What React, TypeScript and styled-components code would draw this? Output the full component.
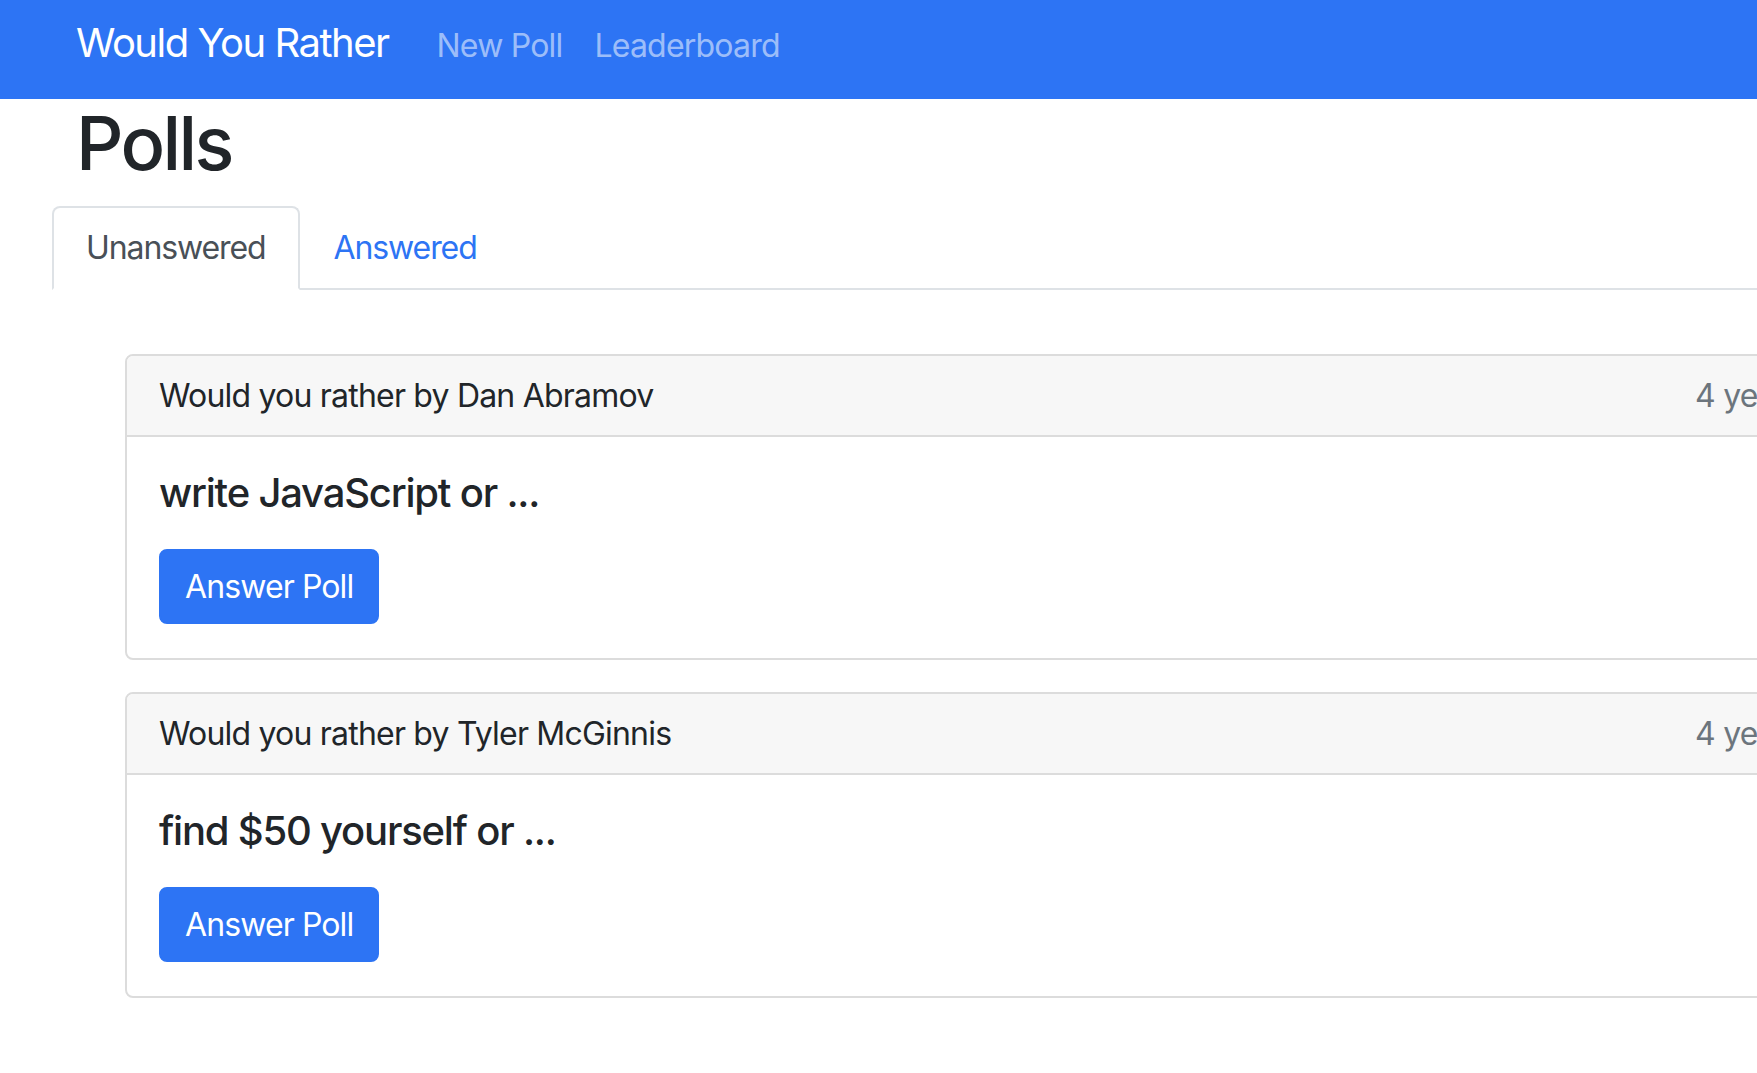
import React, { useState } from 'react';
import styled, { createGlobalStyle } from 'styled-components';

const GlobalStyle = createGlobalStyle`
  html, body {
    margin: 0;
    padding: 0;
    background: #ffffff;
    overflow: hidden;
  }
  body {
    font-family: Inter, "Noto Sans", "Liberation Sans", sans-serif;
    color: #212529;
  }
  * {
    box-sizing: border-box;
  }
`;

const Navbar = styled.nav`
  height: 99px;
  background-color: #2d74f4;
  display: flex;
  align-items: baseline;
  padding: 13px 0 0 76px;
`;

const Brand = styled.a`
  font-size: 40px;
  line-height: 60px;
  letter-spacing: -1.5px;
  color: #ffffff;
  text-decoration: none;
  margin-right: 48px;
  white-space: nowrap;
`;

const NavLink = styled.a`
  font-size: 32px;
  line-height: 48px;
  letter-spacing: -0.8px;
  color: rgba(255, 255, 255, 0.55);
  text-decoration: none;
  margin-right: 32px;
  white-space: nowrap;
`;

const Main = styled.div`
  padding-left: 52px;
  width: 1900px;
`;

const Title = styled.h1`
  margin: 0 0 18px 24px;
  font-size: 74px;
  line-height: 89px;
  letter-spacing: -2.6px;
  font-weight: 500;
`;

const Tabs = styled.ul`
  list-style: none;
  margin: 0;
  padding: 0;
  display: flex;
  border-bottom: 2px solid #dee2e6;
`;

const Tab = styled.li<{ $active: boolean }>`
  margin-bottom: -2px;
  padding: 16px 32px;
  font-size: 32px;
  line-height: 48px;
  letter-spacing: -1.1px;
  border: 2px solid ${(p) => (p.$active ? '#dee2e6' : 'transparent')};
  border-bottom-color: ${(p) => (p.$active ? '#ffffff' : 'transparent')};
  border-radius: 8px 8px 0 0;
  background: ${(p) => (p.$active ? '#ffffff' : 'transparent')};
  color: ${(p) => (p.$active ? '#495057' : '#2d74f4')};
  cursor: pointer;
`;

const PollList = styled.div`
  padding: 64px 0 0 73px;
  display: flex;
  flex-direction: column;
  gap: 32px;
`;

const Card = styled.div`
  width: 1774px;
  border: 2px solid #dcdcdc;
  border-radius: 8px;
  overflow: hidden;
`;

const CardHeader = styled.div`
  display: flex;
  justify-content: space-between;
  padding: 16px 32px 15px;
  font-size: 32px;
  line-height: 48px;
  letter-spacing: -0.8px;
  background-color: #f7f7f7;
  border-bottom: 2px solid #dcdcdc;
`;

const TimeAgo = styled.span`
  color: #6c757d;
`;

const CardBody = styled.div`
  padding: 32px 32px 34px;
`;

const Question = styled.h5`
  margin: 0 0 32px;
  font-size: 40px;
  line-height: 48px;
  letter-spacing: -1.2px;
  font-weight: 500;
`;

const AnswerButton = styled.button`
  font-family: inherit;
  font-size: 32px;
  line-height: 48px;
  letter-spacing: -0.9px;
  color: #ffffff;
  background-color: #2d74f4;
  border: 2px solid #2d74f4;
  border-radius: 8px;
  padding: 11.5px 24px;
  cursor: pointer;
`;

const polls = [
  { id: 'p1', author: 'Dan Abramov', option: 'write JavaScript', time: '4 years ago' },
  { id: 'p2', author: 'Tyler McGinnis', option: 'find $50 yourself', time: '4 years ago' },
];

const App = () => {
  const [tab, setTab] = useState<string>('unanswered');

  return (
    <>
      <GlobalStyle />
      <Navbar>
        <Brand href="#">Would You Rather</Brand>
        <NavLink href="#">New Poll</NavLink>
        <NavLink href="#">Leaderboard</NavLink>
      </Navbar>
      <Main>
        <Title>Polls</Title>
        <Tabs>
          <Tab $active={tab === 'unanswered'} onClick={() => setTab('unanswered')}>
            Unanswered
          </Tab>
          <Tab $active={tab === 'answered'} onClick={() => setTab('answered')}>
            Answered
          </Tab>
        </Tabs>
        <PollList>
          {polls.map((poll) => (
            <Card key={poll.id}>
              <CardHeader>
                <span>Would you rather by {poll.author}</span>
                <TimeAgo>{poll.time}</TimeAgo>
              </CardHeader>
              <CardBody>
                <Question>{poll.option} or ...</Question>
                <AnswerButton>Answer Poll</AnswerButton>
              </CardBody>
            </Card>
          ))}
        </PollList>
      </Main>
    </>
  );
};

export default App;
